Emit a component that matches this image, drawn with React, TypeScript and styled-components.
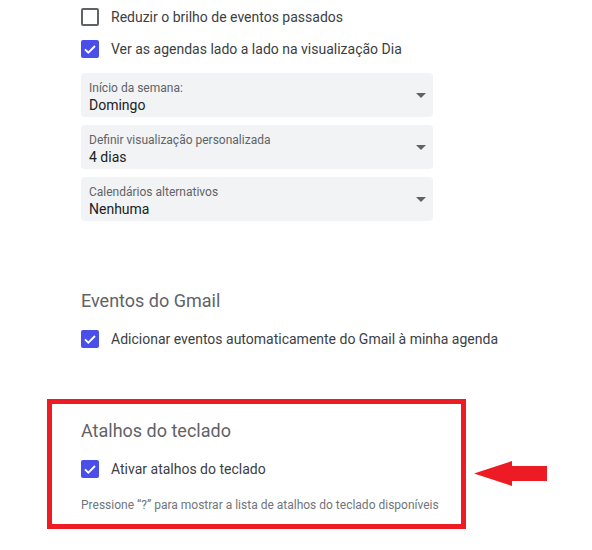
import React from "react";
import styled, { createGlobalStyle } from "styled-components";

const Global = createGlobalStyle`
  html, body { margin: 0; padding: 0; background: #fff; }
  body { font-family: Roboto, "Liberation Sans", Arial, sans-serif; -webkit-font-smoothing: antialiased; }
`;

const Page = styled.div`
  position: relative;
  width: 592px;
  height: 550px;
  padding: 1px 0 0 47px;
  box-sizing: border-box;
  overflow: hidden;
`;

const Section = styled.section<{ $top?: number }>`
  padding-left: 34px;
  margin-top: ${(p) => p.$top ?? 0}px;
  display: flex;
  flex-direction: column;
`;

const Highlight = styled.section`
  margin-top: 44px;
  width: 419px;
  box-sizing: border-box;
  border: 5px solid #ed1c24;
  padding: 15px 0 11px 29px;
  display: flex;
  flex-direction: column;
`;

const Heading = styled.h2`
  margin: 0;
  font-family: Roboto, "Liberation Sans", Arial, sans-serif;
  font-size: 18px;
  line-height: 24px;
  font-weight: 400;
  color: #5f6368;
`;

const Row = styled.label<{ $top?: number }>`
  display: flex;
  align-items: center;
  gap: 12px;
  height: 32px;
  margin-top: ${(p) => p.$top ?? 0}px;
  font-size: 14px;
  color: #3c4043;
`;

const Box = styled.span<{ $checked: boolean }>`
  width: 18px;
  height: 18px;
  box-sizing: border-box;
  border-radius: 2px;
  flex: none;
  display: flex;
  align-items: center;
  justify-content: center;
  ${(p) =>
    p.$checked
      ? "background: #4a4fe8; border: none;"
      : "background: #fff; border: 2px solid #5f6368;"}
`;

const SelectGroup = styled.div`
  margin-top: 8px;
  display: flex;
  flex-direction: column;
  gap: 8px;
  width: 352px;
`;

const Select = styled.div`
  height: 44px;
  box-sizing: border-box;
  background: #f1f3f4;
  border-radius: 4px;
  padding: 7px 7px 0 8px;
  display: flex;
  align-items: center;
  justify-content: space-between;
`;

const SelectText = styled.div`
  display: flex;
  flex-direction: column;
  align-self: flex-start;
`;

const SelectLabel = styled.span`
  font-size: 12px;
  line-height: 16px;
  color: #5f6368;
`;

const SelectValue = styled.span`
  font-size: 14px;
  line-height: 18px;
  color: #202124;
`;

const Caret = styled.span`
  width: 0;
  height: 0;
  border-left: 5px solid transparent;
  border-right: 5px solid transparent;
  border-top: 5px solid #5f6368;
  margin-top: -7px;
`;

const Hint = styled.p`
  margin: 12px 0 0;
  font-size: 12px;
  line-height: 16px;
  color: #70757a;
`;

const Arrow = styled.svg`
  position: absolute;
  left: 474px;
  top: 461px;
`;

function Check({ checked, children, top }: { checked: boolean; children: React.ReactNode; top?: number }) {
  return (
    <Row $top={top}>
      <Box $checked={checked}>
        {checked && (
          <svg width="16" height="16" viewBox="0 0 24 24">
            <path d="M4.5 12.5l5 5L19.5 7.5" fill="none" stroke="#fff" strokeWidth="2.8" />
          </svg>
        )}
      </Box>
      <span>{children}</span>
    </Row>
  );
}

function Dropdown({ label, value }: { label: string; value: string }) {
  return (
    <Select>
      <SelectText>
        <SelectLabel>{label}</SelectLabel>
        <SelectValue>{value}</SelectValue>
      </SelectText>
      <Caret />
    </Select>
  );
}

export default function App() {
  return (
    <>
      <Global />
      <Page>
        <Section>
          <Check checked={false}>Reduzir o brilho de eventos passados</Check>
          <Check checked>Ver as agendas lado a lado na visualização Dia</Check>
          <SelectGroup>
            <Dropdown label="Início da semana:" value="Domingo" />
            <Dropdown label="Definir visualização personalizada" value="4 dias" />
            <Dropdown label="Calendários alternativos" value="Nenhuma" />
          </SelectGroup>
        </Section>
        <Section $top={68}>
          <Heading>Eventos do Gmail</Heading>
          <Check checked top={10}>
            Adicionar eventos automaticamente do Gmail à minha agenda
          </Check>
        </Section>
        <Highlight>
          <Heading>Atalhos do teclado</Heading>
          <Check checked top={10}>
            Ativar atalhos do teclado
          </Check>
          <Hint>Pressione “?” para mostrar a lista de atalhos do teclado disponíveis</Hint>
        </Highlight>
        <Arrow width="74" height="26" viewBox="0 0 74 26">
          <polygon points="0,12.5 38,0 38,5 73,5 73,20 38,20 38,25" fill="#ed1c24" />
        </Arrow>
      </Page>
    </>
  );
}
